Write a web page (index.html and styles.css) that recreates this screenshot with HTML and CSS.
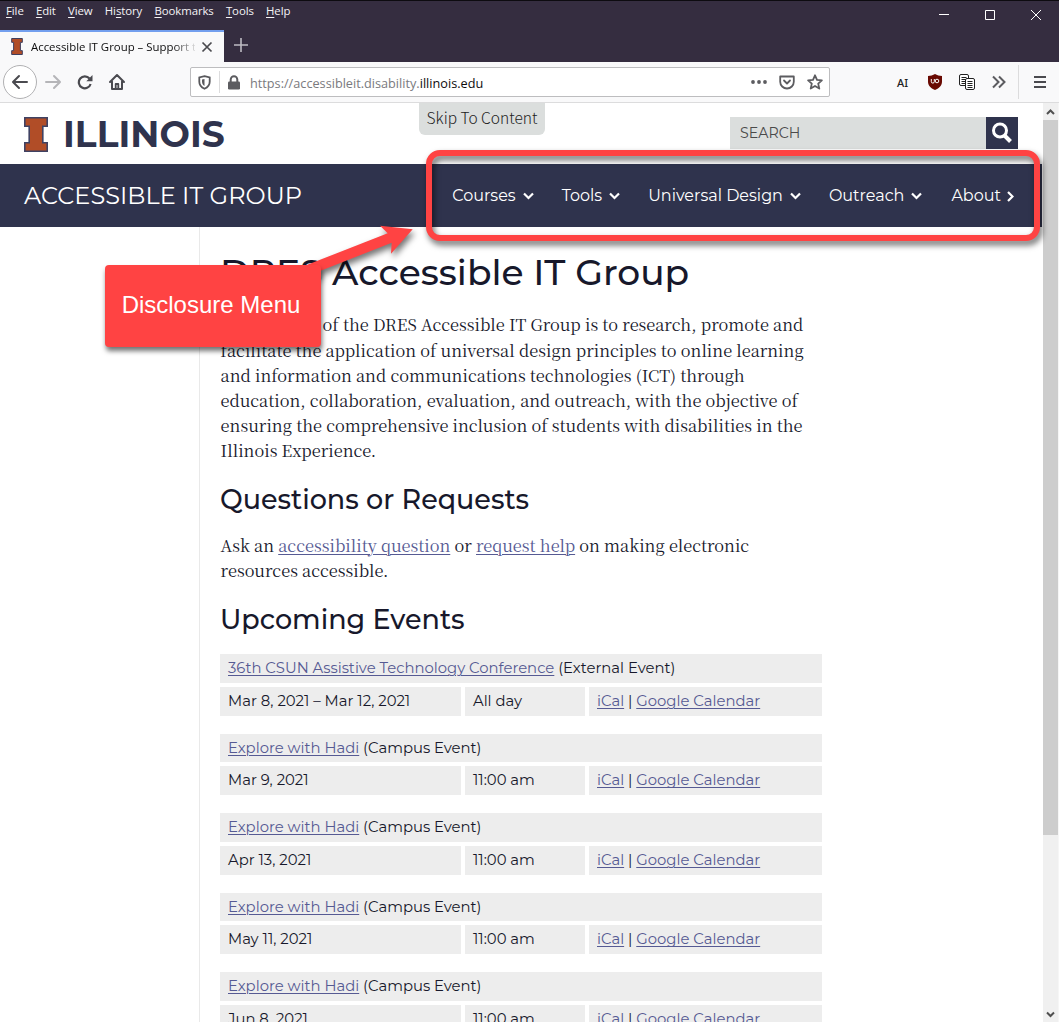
FILE: index.html
```
<!DOCTYPE html>
<html lang="en">
<head>
<meta charset="utf-8">
<title>Accessible IT Group – Support</title>
<link rel="stylesheet" href="styles.css">
</head>
<body>
<div class="window">
  <header class="titlebar">
    <div class="topline">
      <nav class="menubar">
        <span><u>F</u>ile</span><span><u>E</u>dit</span><span><u>V</u>iew</span><span>Hi<u>s</u>tory</span><span><u>B</u>ookmarks</span><span><u>T</u>ools</span><span><u>H</u>elp</span>
      </nav>
      <svg class="controls" width="106" height="14" viewBox="0 0 106 14" fill="none" stroke="#fff" stroke-width="1">
        <path d="M1 6.500H11M47.500 2.500h9v9h-9zM93 2l10 10M103 2L93 12"/>
      </svg>
    </div>
    <div class="tabs">
      <div class="tab">
        <svg class="favicon" width="12" height="17" viewBox="0 0 24 35"><path d="M1 1h22v8h-4v17h4v8H1v-8h4V9H1z" fill="#b14d27" stroke="#3b3c5c" stroke-width="2"/></svg>
        <span class="tab-title">Accessible IT Group – Support th</span>
        <svg width="12" height="12" viewBox="0 0 12 12" stroke="#4a4a4f" stroke-width="1.700"><path d="M1.500 1.500l9 9M10.500 1.500l-9 9"/></svg>
      </div>
      <svg class="newtab" width="14" height="14" viewBox="0 0 14 14" stroke="#bdbbc2" stroke-width="1.600"><path d="M7 0v14M0 7h14"/></svg>
    </div>
  </header>

  <div class="toolbar">
    <div class="buttons">
      <span class="back"><svg width="18" height="16" viewBox="0 0 18 16" fill="none" stroke="#4a4a4f" stroke-width="2" stroke-linecap="round" stroke-linejoin="round"><path d="M8 2L2 8l6 6M2.500 8H16"/></svg></span>
      <svg width="18" height="16" viewBox="0 0 18 16" fill="none" stroke="#b5b5b8" stroke-width="2" stroke-linecap="round" stroke-linejoin="round"><path d="M10 2l6 6-6 6M15.500 8H2"/></svg>
      <svg width="18" height="16" viewBox="0 0 18 16" fill="none" stroke="#4a4a4f" stroke-width="2.200"><path d="M13.500 4.500A6 6 0 1 0 14.600 10"/><path d="M16.500 1v6.200h-6.200z" fill="#4a4a4f" stroke="none"/></svg>
      <svg width="18" height="18" viewBox="0 0 18 18" fill="none" stroke="#4a4a4f" stroke-width="2" stroke-linejoin="round" stroke-linecap="round"><path d="M2 9l7-7 7 7M4 8.500V16h10V8.500"/><path d="M7.700 15v-4h2.600v4" stroke-width="1.800"/></svg>
    </div>
    <div class="urlbar">
      <svg width="13" height="15" viewBox="0 0 13 15" fill="none" stroke="#58585c" stroke-width="1.800"><path d="M6.500 1.200l5.200 1.300v4.200c0 3.300-2 5.600-5.200 7-3.200-1.400-5.200-3.700-5.200-7V2.500z"/><path d="M6.500 4v7C5 10 4 8.500 4 6.500V4.600z" fill="#58585c" stroke="none"/></svg>
      <i class="sep"></i>
      <svg width="12" height="15" viewBox="0 0 12 15"><rect y="6.500" width="12" height="8" rx="1.300" fill="#5c5c60"/><path d="M2.700 7V4.500a3.300 3.300 0 0 1 6.600 0V7" fill="none" stroke="#5c5c60" stroke-width="2"/></svg>
      <span class="url">https://accessibleit.disability.<b>illinois.edu</b></span>
      <svg width="16" height="4" viewBox="0 0 16 4" fill="#5c5c60"><circle cx="2" cy="2" r="1.900"/><circle cx="8" cy="2" r="1.900"/><circle cx="14" cy="2" r="1.900"/></svg>
      <svg class="pocket" width="16" height="15" viewBox="0 0 16 15" fill="none" stroke="#5c5c60" stroke-width="1.800" stroke-linecap="round" stroke-linejoin="round"><path d="M1.200 1.500h13.600v5.200a6.800 6.800 0 0 1-13.600 0z"/><path d="M5 5.500l3 3 3-3"/></svg>
      <svg width="16" height="16" viewBox="0 0 16 16" fill="none" stroke="#5c5c60" stroke-width="1.800" stroke-linejoin="round"><path d="M8 1.300l2 4.600 4.900.4-3.700 3.300 1.100 5L8 12l-4.300 2.600 1.100-5L1.100 6.300 6 5.900z"/></svg>
    </div>
    <div class="extensions">
      <span class="ai">AI</span>
      <span class="shield"><svg width="14" height="16" viewBox="0 0 14 16"><path d="M7 0c2 1.300 4.500 1.900 7 2v5.500c0 4-2.500 6.700-7 8.500-4.500-1.800-7-4.500-7-8.500V2c2.500-.1 5-.7 7-2z" fill="#690a02"/><path d="M3.300 5v2.600a1.500 1.500 0 0 0 3 0V5" fill="none" stroke="#fff" stroke-width="1"/><circle cx="9" cy="7" r="1.800" fill="none" stroke="#fff"/></svg></span>
      <svg width="16" height="16" viewBox="0 0 16 16" fill="#fff" stroke="#222" stroke-width="1"><rect x=".5" y=".5" width="9" height="11" rx="1.500"/><path d="M2.500 3.500h5M2.500 5.500h5M2.500 7.500h5M2.500 9.500h5"/><rect x="6.500" y="4.500" width="9" height="11" rx="1.500"/><path d="M8.500 7.500h5M8.500 9.500h5M8.500 11.500h5M8.500 13.500h5"/></svg>
      <svg width="14" height="14" viewBox="0 0 14 14" fill="none" stroke="#5c5c60" stroke-width="2"><path d="M1 1.500L6.500 7 1 12.500M7 1.500L12.500 7 7 12.500"/></svg>
      <i class="sep tall"></i>
      <svg width="12" height="12" viewBox="0 0 12 12" stroke="#4a4a4f" stroke-width="2"><path d="M0 1h12M0 6h12M0 11h12"/></svg>
    </div>
  </div>

  <div class="viewport">
    <div class="page">
      <div class="brandbar">
        <div class="brand">
          <svg width="24" height="35" viewBox="0 0 24 35"><path d="M.8.800h22.400v8.400h-4.400v16.600h4.400v8.400H.8v-8.400h4.400V9.200H.8z" fill="#b14d27" stroke="#3f4263" stroke-width="1.600"/></svg>
          <span class="wordmark">ILLINOIS</span>
        </div>
        <a class="skip">Skip To Content</a>
        <div class="search">
          <span class="search-field">SEARCH</span>
          <span class="search-button"><svg width="22" height="22" viewBox="0 0 22 22" fill="none" stroke="#fff"><circle cx="9" cy="8.500" r="6.500" stroke-width="3"/><path d="M13.500 13.500l6 6" stroke-width="4"/></svg></span>
        </div>
      </div>
      <div class="sitebar">
        <span class="sitename">ACCESSIBLE IT GROUP</span>
        <nav class="sitenav">
          <a>Courses<svg width="11" height="8" viewBox="0 0 11 8"><path d="M1 1.500l4.500 4.500L10 1.500"/></svg></a>
          <a>Tools<svg width="11" height="8" viewBox="0 0 11 8"><path d="M1 1.500l4.500 4.500L10 1.500"/></svg></a>
          <a>Universal Design<svg width="11" height="8" viewBox="0 0 11 8"><path d="M1 1.500l4.500 4.500L10 1.500"/></svg></a>
          <a>Outreach<svg width="11" height="8" viewBox="0 0 11 8"><path d="M1 1.500l4.500 4.500L10 1.500"/></svg></a>
          <a class="about">About<svg width="7" height="11" viewBox="0 0 7 11"><path d="M1 1l4.500 4.500L1 10"/></svg></a>
        </nav>
      </div>
      <div class="columns">
        <aside class="side"></aside>
        <main class="content">
          <h1>DRES Accessible IT Group</h1>
          <p>The mission of the DRES Accessible IT Group is to research, promote and<br>facilitate the application of universal design principles to online learning<br>and information and communications technologies (ICT) through<br>education, collaboration, evaluation, and outreach, with the objective of<br>ensuring the comprehensive inclusion of students with disabilities in the<br>Illinois Experience.</p>
          <h2>Questions or Requests</h2>
          <p>Ask an <a>accessibility question</a> or <a>request help</a> on making electronic<br>resources accessible.</p>
          <h2>Upcoming Events</h2>
          <div class="events">
            <div class="event">
              <div class="name"><a>36th CSUN Assistive Technology Conference</a> (External Event)</div>
              <div>Mar 8, 2021 – Mar 12, 2021</div><div>All day</div><div><a>iCal</a> | <a>Google Calendar</a></div>
            </div>
            <div class="event">
              <div class="name"><a>Explore with Hadi</a> (Campus Event)</div>
              <div>Mar 9, 2021</div><div>11:00 am</div><div><a>iCal</a> | <a>Google Calendar</a></div>
            </div>
            <div class="event">
              <div class="name"><a>Explore with Hadi</a> (Campus Event)</div>
              <div>Apr 13, 2021</div><div>11:00 am</div><div><a>iCal</a> | <a>Google Calendar</a></div>
            </div>
            <div class="event">
              <div class="name"><a>Explore with Hadi</a> (Campus Event)</div>
              <div>May 11, 2021</div><div>11:00 am</div><div><a>iCal</a> | <a>Google Calendar</a></div>
            </div>
            <div class="event">
              <div class="name"><a>Explore with Hadi</a> (Campus Event)</div>
              <div>Jun 8, 2021</div><div>11:00 am</div><div><a>iCal</a> | <a>Google Calendar</a></div>
            </div>
          </div>
        </main>
      </div>
    </div>
    <div class="scrollbar">
      <svg width="15" height="17" viewBox="0 0 15 17" fill="none" stroke="#505050" stroke-width="2"><path d="M4 11l3.500-3.500L11 11"/></svg>
      <div class="thumb"></div>
      <svg width="15" height="17" viewBox="0 0 15 17" fill="none" stroke="#505050" stroke-width="2"><path d="M4 7.500L7.500 11 11 7.500"/></svg>
    </div>
  </div>

  <div class="frame"></div>
  <svg class="arrow" width="130" height="60" viewBox="295 220 130 60"><path d="M306 265.300L387.700 233.300 380 225.700 412.700 229.300 391 253.700 391.700 242.700 320 271v6h-14z" fill="#ff4343"/></svg>
  <div class="callout">Disclosure Menu</div>
</div>
</body>
</html>
```
FILE: styles.css
```
* { box-sizing: border-box; }
body { margin: 0; background: #fff; }
svg { display: block; flex: none; }

.window {
  position: relative;
  width: 1059px;
  height: 1022px;
  overflow: hidden;
  display: flex;
  flex-direction: column;
  font-family: "Open Sans", "Noto Sans", sans-serif;
}

/* Browser chrome */
.titlebar {
  height: 62px;
  flex: none;
  background: #352d40;
  border-top: 1px solid #0d0b10;
  display: flex;
  flex-direction: column;
  justify-content: space-between;
}
.topline { display: flex; justify-content: space-between; height: 28px; }
.menubar {
  display: flex;
  gap: 12.200px;
  padding: 1px 0 0 6px;
  font-size: 11.4px;
  letter-spacing: -0.080px;
  line-height: 18px;
  color: #f4f3f6;
}
.menubar u { text-underline-offset: 2px; }
.controls { margin: 7px 15px 0 0; }
.tabs { display: flex; height: 32px; align-items: stretch; }
.tab {
  width: 224px;
  background: #f9f9fa;
  border-top: 2px solid #739fee;
  display: flex;
  align-items: center;
  padding: 0 11px 1px;
}
.tab-title {
  width: 165px;
  margin: 0 6px 0 8px;
  overflow: hidden;
  white-space: nowrap;
  font-size: 11.4px;
  color: #0c0c0d;
  -webkit-mask-image: linear-gradient(to right, #000 142px, transparent 167px);
  mask-image: linear-gradient(to right, #000 142px, transparent 167px);
}
.newtab { margin: 8px 0 0 10px; }

.toolbar {
  height: 41px;
  flex: none;
  background: #f9f9fa;
  border-bottom: 1px solid #dcdcdd;
  display: flex;
  align-items: center;
}
.buttons { display: flex; align-items: center; gap: 14px; padding-left: 3px; width: 190px; }
.back {
  width: 34px;
  height: 34px;
  border: 1px solid #b1b1b3;
  border-radius: 50%;
  background: #fff;
  display: flex;
  align-items: center;
  justify-content: center;
  margin-right: -7px;
}
.urlbar {
  width: 640px;
  height: 30px;
  border: 1px solid #bdbdbf;
  border-radius: 2px;
  background: #fff;
  display: flex;
  align-items: center;
  padding: 0 6px 0 7px;
}
.sep { width: 1px; height: 22px; background: #dcdcdd; margin: 0 8px 0 8px; }
.tall { height: 34px; margin: 0 15px 0 12px; }
.url { flex: 1; margin-left: 10px; padding-top: 1px; font-size: 12.700px; color: #7a7a7e; white-space: nowrap; }
.url b { font-weight: 400; color: #0c0c0d; }
.pocket { margin: 0 12px; }
.extensions { display: flex; align-items: center; margin-left: 67px; }
.ai { width: 31px; font: 500 11px "Noto Sans", sans-serif; color: #222; }
.shield { margin-right: 17px; }
.extensions > svg + svg { margin-left: 17px; }

/* Web page */
.viewport { flex: 1; display: flex; min-height: 0; }
.page { width: 1042px; margin-right: 1px; overflow: hidden; }
.brandbar { height: 61px; display: flex; padding-left: 24px; }
.brand { display: flex; width: 395px; padding-top: 14px; gap: 15px; }
.wordmark {
  font: 700 36px/35px "Montserrat", "Inter", sans-serif;
  letter-spacing: 0.050px;
  color: #2f334d;
}
.skip {
  width: 126px;
  height: 32px;
  background: #dbdedd;
  border-radius: 0 0 6px 6px;
  text-align: center;
  font: 300 15.500px/28px "Noto Sans CJK JP", "Open Sans", sans-serif;
  color: #222;
  white-space: nowrap;
}
.search { display: flex; margin: 14px 0 0 185px; height: 32px; }
.search-field {
  width: 256px;
  background: #dbdedd;
  padding-left: 10px;
  font: 14.200px/32px "Montserrat", "Inter", sans-serif;
  color: #4a4a4a;
}
.search-button {
  width: 32px;
  background: #2f334d;
  display: flex;
  align-items: center;
  justify-content: center;
}
.sitebar {
  height: 63px;
  background: #2f334d;
  display: flex;
  align-items: center;
  justify-content: space-between;
  padding: 0 28px 0 24px;
  color: #fff;
  font-family: "Montserrat", "Inter", sans-serif;
  white-space: nowrap;
}
.sitename { font-size: 24px; letter-spacing: 0.050px; }
.sitenav { display: flex; gap: 28px; font-size: 16px; }
.sitenav a { display: flex; align-items: center; gap: 7px; }
.sitenav .about { gap: 6px; margin-left: 1px; }
.sitenav svg { margin-top: 1px; fill: none; stroke: #fff; stroke-width: 2.200; }

.columns { display: flex; height: 800px; }
.side { width: 200px; border-right: 1px solid #e9e9e9; }
.content { width: 622px; padding: 23px 0 0 20px; color: #17182b; white-space: nowrap; }
h1, h2 { font-family: "Montserrat", "Inter", sans-serif; font-weight: 500; margin: 0; }
h1 { font-size: 36px; line-height: 44px; }
h2 { font-size: 27px; line-height: 33px; margin-top: 19px; }
p {
  margin: 17.300px 0 0;
  font: 16.400px/25.200px "Noto Serif CJK SC", "Noto Serif", serif;
}
h1 + p { margin-top: 18.300px; }
p + h2:nth-of-type(2) { margin-top: 19.500px; }
.content p { padding-left: 0.600px; }
.content a { color: #565a93; text-decoration: underline; text-decoration-thickness: 1px; text-underline-offset: 2px; }
.events {
  margin-top: 18.500px;
  display: flex;
  flex-direction: column;
  gap: 18px;
  font: 14.840px/29.600px "Montserrat", "Inter", sans-serif;
}
.event { display: grid; grid-template-columns: 241px 120px 233px; gap: 4px; }
.event > div { background: #ededed; padding-left: 8px; height: 28.750px; }
.event .name { grid-column: 1 / -1; }

.scrollbar { width: 16px; background: #f0f0f0; border-right: 1px solid #f6f6f6; display: flex; flex-direction: column; }
.thumb { height: 715px; background: #cdcdcd; margin-bottom: auto; }

/* Annotations laid over the page */
.frame {
  position: absolute;
  left: 426px;
  top: 150px;
  width: 614px;
  height: 91px;
  border: 6px solid #ff4343;
  border-radius: 14px;
  filter: drop-shadow(2px 4px 3px rgba(0, 0, 0, 0.6));
}
.arrow { position: absolute; left: 295px; top: 220px; filter: drop-shadow(2px 4px 3px rgba(0, 0, 0, 0.55)); }
.callout {
  position: absolute;
  left: 105px;
  top: 265px;
  width: 216px;
  height: 82px;
  background: #ff4343;
  border-radius: 4px;
  box-shadow: 1px 4px 5px rgba(0, 0, 0, 0.55);
  color: #fff;
  text-align: center;
  font: 24px/80px "Liberation Sans", Arial, sans-serif;
  padding-right: 4px;
}
```
